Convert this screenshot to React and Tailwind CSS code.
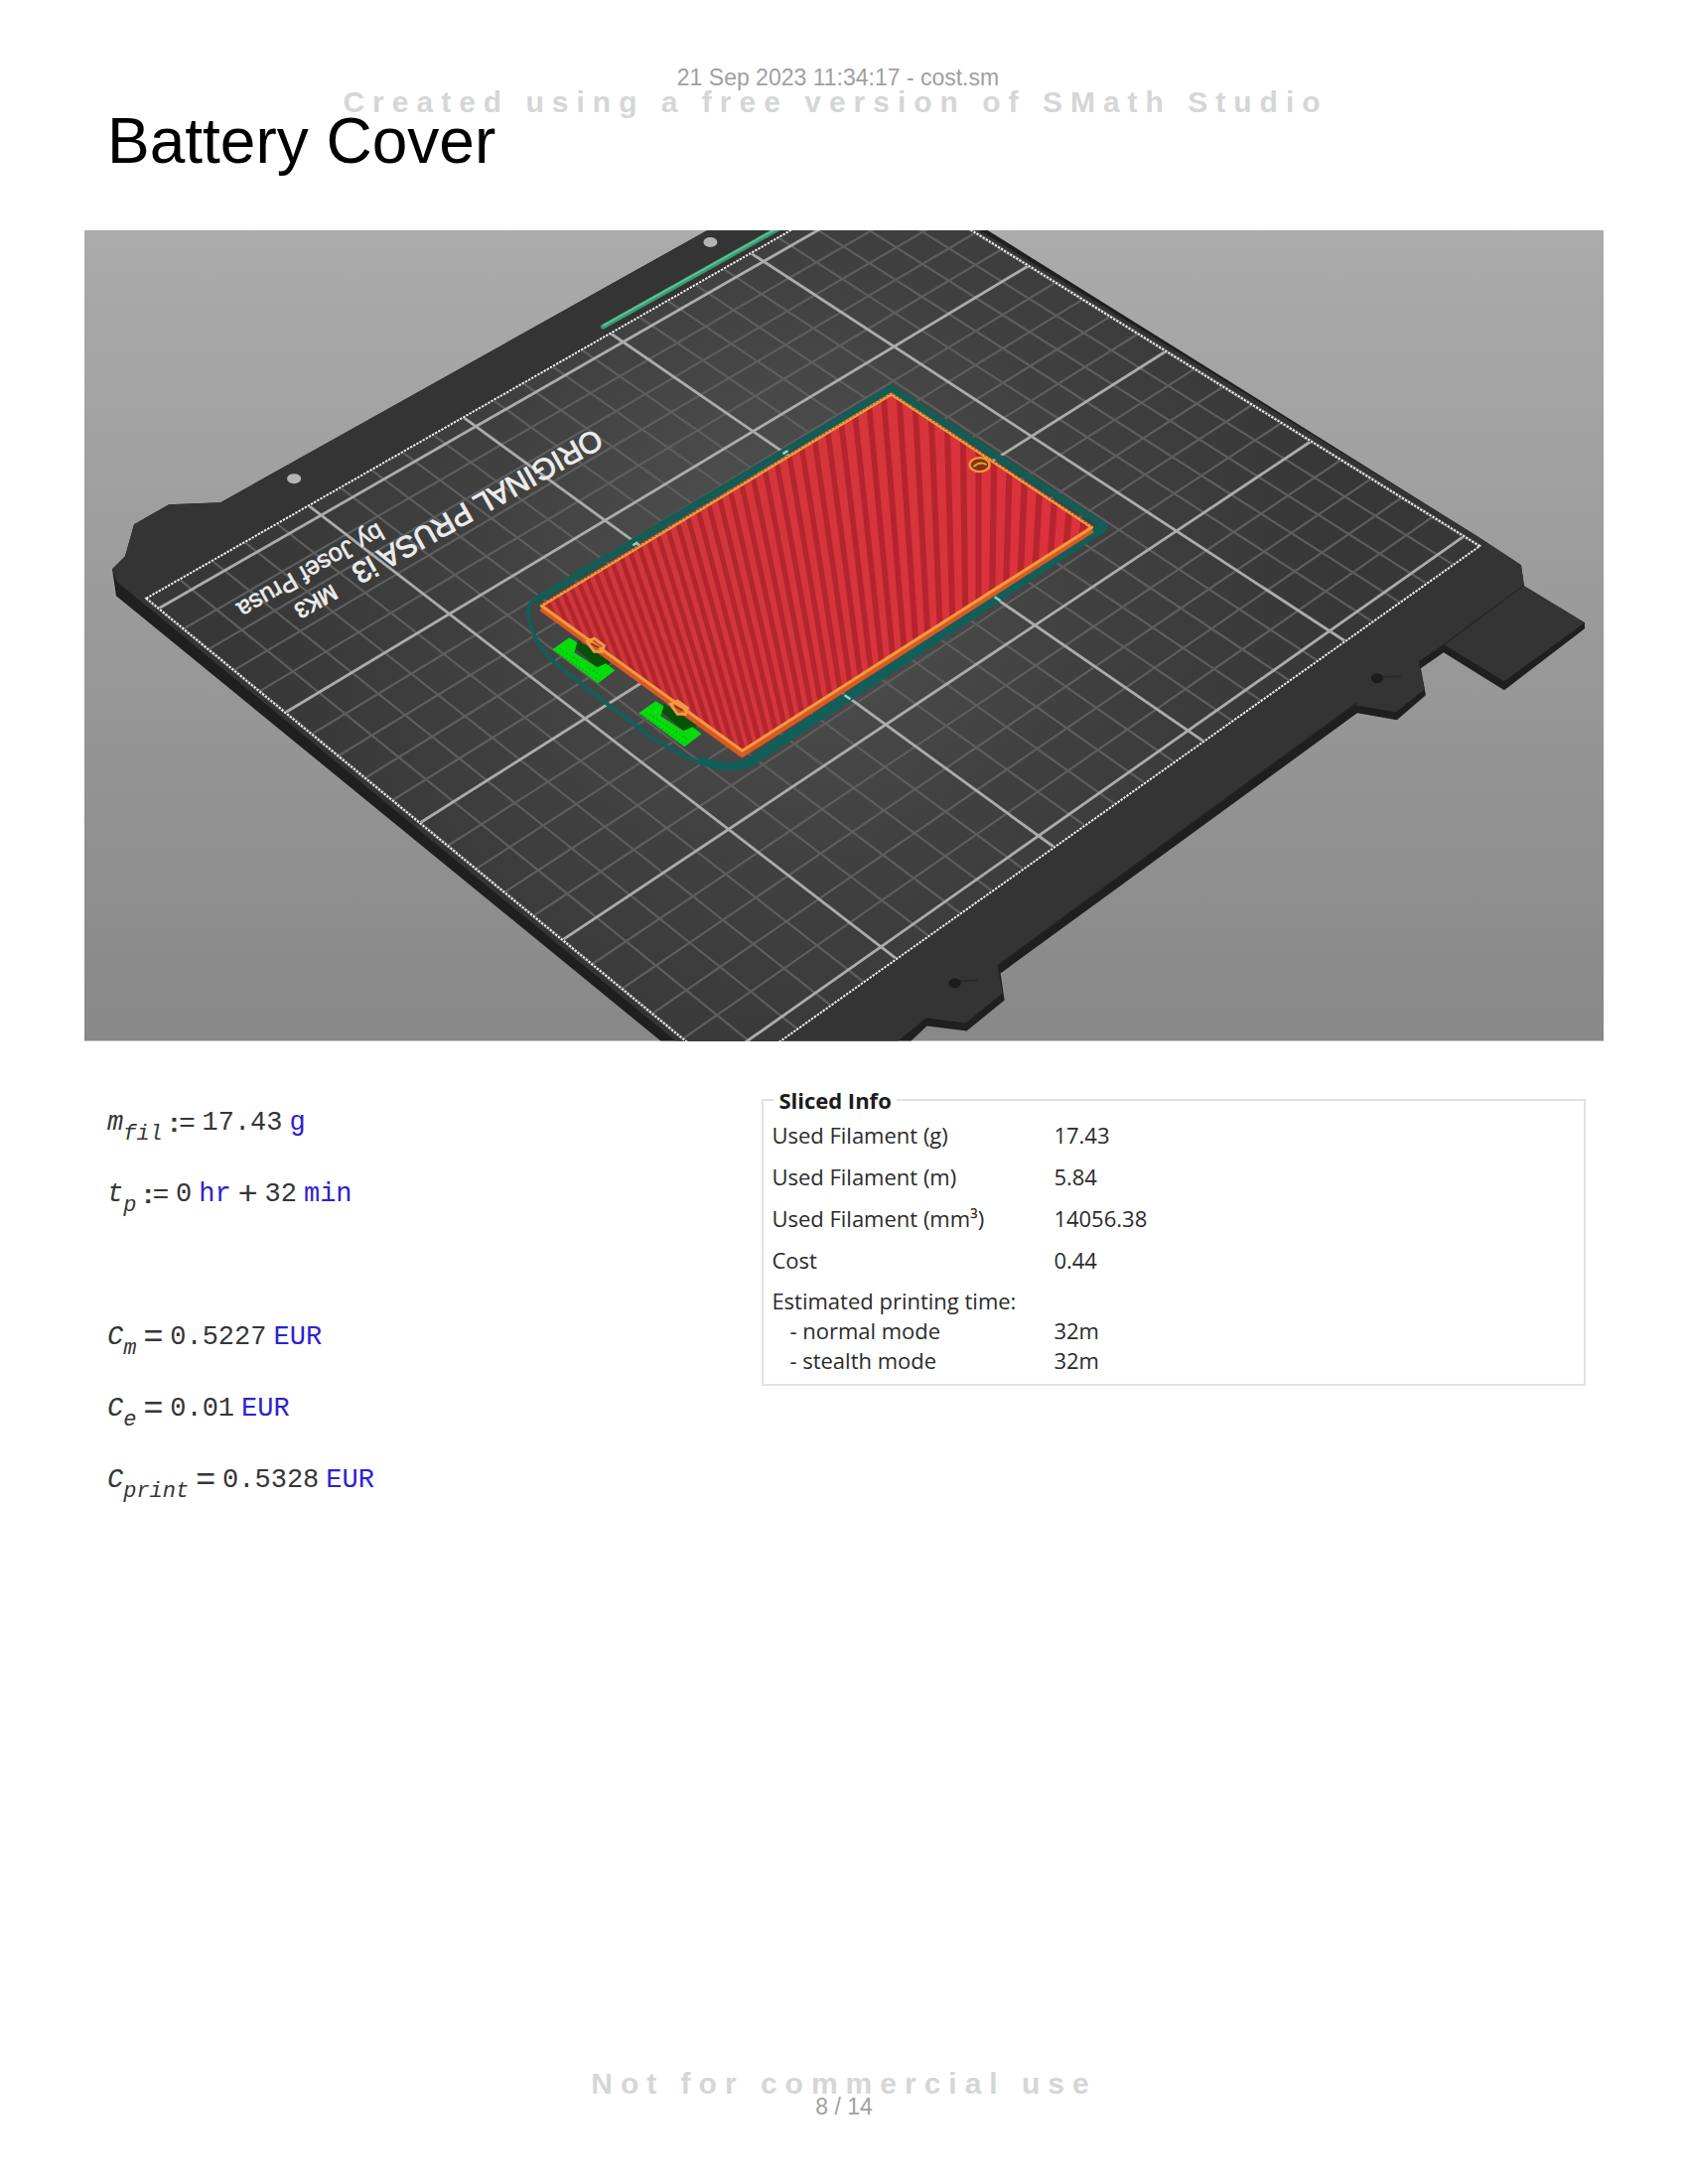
import React from "react";

/* ---------- perspective of the print bed ---------- */

// Bed coordinates are in units of 50 mm: u runs 0..5, v runs 0..4.
const ANCHORS = [
  [0, 0, 159.6, 612.7],
  [5, 4, 1473.5, 540],
  [4, 0, 768.6, 263.3],
  [1, 4, 886.6, 953.3],
];

function solveProjection(anchors) {
  const m = [];
  for (const [u, v, x, y] of anchors) {
    m.push([u, v, 1, 0, 0, 0, -u * x, -v * x, x]);
    m.push([0, 0, 0, u, v, 1, -u * y, -v * y, y]);
  }
  for (let c = 0; c < 8; c++) {
    let p = c;
    for (let r = c; r < 8; r++) if (Math.abs(m[r][c]) > Math.abs(m[p][c])) p = r;
    [m[c], m[p]] = [m[p], m[c]];
    for (let r = 0; r < 8; r++) {
      if (r === c) continue;
      const f = m[r][c] / m[c][c];
      for (let k = c; k < 9; k++) m[r][k] -= f * m[c][k];
    }
  }
  return m.map((row, i) => row[8] / row[i]);
}

const H = solveProjection(ANCHORS);

function project(u, v) {
  const w = H[6] * u + H[7] * v + 1;
  return [(H[0] * u + H[1] * v + H[2]) / w, (H[3] * u + H[4] * v + H[5]) / w];
}

const toPoints = (list) =>
  list.map(([u, v]) => project(u, v).map((n) => n.toFixed(1)).join(",")).join(" ");

function BedLine({ from, to, ...rest }) {
  return <polyline points={toPoints([from, to])} fill="none" {...rest} />;
}

const V_MIN = -0.1;
const V_MAX = 4.1;
const EDGE = [
  [0, V_MIN],
  [5, V_MIN],
  [5, V_MAX],
  [0, V_MAX],
];

function BedGrid() {
  const minor = [];
  const major = [];
  for (let i = 0; i <= 25; i++) {
    const line = <BedLine key={"u" + i} from={[i / 5, V_MIN]} to={[i / 5, V_MAX]} />;
    (i % 5 === 0 ? major : minor).push(line);
  }
  for (let j = 0; j <= 20; j++) {
    const line = <BedLine key={"v" + j} from={[0, j / 5]} to={[5, j / 5]} />;
    (j % 5 === 0 ? major : minor).push(line);
  }
  return (
    <g>
      <g stroke="#5e5e5e" strokeWidth="2.2">{minor}</g>
      <g stroke="#acacac" strokeWidth="2.8">{major}</g>
    </g>
  );
}

function InfillStripes() {
  const stripes = [];
  let x = 420;
  while (x < 1120) {
    const step = 10 + (5 * Math.max(0, x - 560)) / 540;
    const lean = (985 - x) * 0.001;
    stripes.push(
      <line
        key={x}
        x1={x - lean * 200}
        y1={380}
        x2={x + lean * 190}
        y2={770}
        stroke="#a81e28"
        strokeOpacity="0.72"
        strokeWidth={step * 0.44}
      />
    );
    x += step;
  }
  return <g>{stripes}</g>;
}

function Support({ dx, dy }) {
  return (
    <g transform={`translate(${dx} ${dy})`}>
      <polygon points="576,650 582,645 615,667 606,676" fill="#045204" />
      <polygon
        points="556,654 573,642 581,647 578,657 601,672 610,668 619,675 602,688"
        fill="#05dc0a"
      />
      <path d="M559 656 L603 685 M563 653 L606 681" stroke="#04a80a" strokeWidth="1" strokeDasharray="2 2" fill="none" />
    </g>
  );
}

function PrintBed() {
  return (
    <svg
      viewBox="85 232 1529 816"
      className="block h-auto w-full"
      role="img"
      aria-label="Sliced part on the print bed"
    >
      <defs>
        <linearGradient id="backdrop" x1="0" y1="0" x2="0" y2="1">
          <stop offset="0" stopColor="#ababab" />
          <stop offset="1" stopColor="#888888" />
        </linearGradient>
        <radialGradient id="sheet" gradientUnits="userSpaceOnUse" cx="790" cy="570" r="560">
          <stop offset="0" stopColor="#525252" />
          <stop offset="0.55" stopColor="#404040" />
          <stop offset="1" stopColor="#373737" />
        </radialGradient>
        <linearGradient id="infill" x1="0" y1="0" x2="1" y2="0">
          <stop offset="0" stopColor="#cc383b" />
          <stop offset="0.5" stopColor="#d4363c" />
          <stop offset="1" stopColor="#de313d" />
        </linearGradient>
        <clipPath id="part">
          <polygon points="897,397 1099,531 747,758 545,610" />
        </clipPath>
      </defs>

      <rect x="85" y="232" width="1529" height="816" fill="url(#backdrop)" />

      {/* heat bed, underside first */}
      <polygon
        points="712,232 994,232 1487,540 1531,569 1534,590 1595,627 1595,633 1514,695 1453,657 1430,673 1435,700 1406,725 1366,718 1007,980 1011,1007 973,1038 933,1033 917,1048 665,1048 117,600 113,573 126,560 135,528 170,508 222,506"
        fill="#1f1f1f"
      />
      <polygon
        points="712,232 986,232 1487,540 1531,569 1534,590 1595,627 1514,686 1453,649 1428,666 1434,694 1405,717 1362,710 1004,972 1009,1000 972,1030 932,1025 904,1048 680,1048 118,586 113,573 126,560 135,528 170,508 222,506"
        fill="#343434"
      />
      <path d="M1533 590 L1453 649 M1365 708 L1004 972" stroke="#262626" strokeWidth="1.5" fill="none" />
      <path d="M1410 681 L1386 682 M985 987 L961 988" stroke="#292929" strokeWidth="2" fill="none" />
      <ellipse cx="1386" cy="683" rx="6" ry="5" fill="#1c1c1c" />
      <ellipse cx="961" cy="990" rx="6" ry="5" fill="#1c1c1c" />
      <ellipse cx="296" cy="482" rx="7" ry="5" fill="#b5b5b5" />
      <ellipse cx="715" cy="244" rx="7" ry="5" fill="#b5b5b5" />

      <polygon points={toPoints(EDGE)} fill="url(#sheet)" />
      <BedGrid />
      <polygon points={toPoints(EDGE)} fill="none" stroke="#303030" strokeWidth="2.4" />
      <polygon
        points={toPoints(EDGE)}
        fill="none"
        stroke="#f0f0f0"
        strokeWidth="2"
        strokeDasharray="2.4 1.2"
      />
      <line x1="607" y1="329" x2="782" y2="231" stroke="#3a9b74" strokeWidth="5" strokeLinecap="round" />
      <line x1="607" y1="328" x2="782" y2="230" stroke="#5fc79b" strokeWidth="1.6" />

      {/* bed lettering */}
      <g fill="#ececec" stroke="#ececec" strokeWidth="0.9" fontFamily="'Liberation Sans', Arial, sans-serif">
        <text transform="translate(599 431) rotate(150.5)" fontSize="30">
          ORIGINAL PRUSA i3
        </text>
        <text transform="translate(334 588) rotate(150.5)" fontSize="22">
          MK3
        </text>
        <text transform="translate(380 526) rotate(150)" fontSize="25" strokeWidth="0.6">
          by Josef Prusa
        </text>
      </g>

      {/* skirt */}
      <path d="M541 603 L897 391 L1112 530" stroke="#145c54" strokeWidth="7" strokeLinejoin="round" fill="none" />
      <path d="M1110 531 L752 769" stroke="#125f5a" strokeWidth="10" strokeLinecap="round" fill="none" />
      <path
        d="M541 602 Q530 607 532 620 Q536 646 558 667 L613 710 L657 743 Q680 758 703 767 Q735 779 756 768"
        stroke="#125f58"
        strokeWidth="4"
        fill="none"
      />
      <path d="M703 765 Q735 777 756 767" stroke="#125f5a" strokeWidth="8" fill="none" />

      <Support dx={0} dy={0} />
      <Support dx={87} dy={64} />

      {/* part */}
      <g clipPath="url(#part)">
        <rect x="540" y="390" width="565" height="375" fill="url(#infill)" />
        <InfillStripes />
      </g>
      <path d="M545 612 L747 759 L1099 533" stroke="#d85a22" strokeWidth="7" strokeLinejoin="round" fill="none" />
      <path
        d="M897 397 L1099 531 L747 756 L545 610 Z"
        stroke="#f29a3e"
        strokeWidth="3"
        strokeLinejoin="round"
        fill="none"
      />
      <path d="M545 609 L897 396 L1099 530" stroke="#8a5a20" strokeWidth="1" strokeDasharray="2 2" fill="none" />
      <g fill="none" stroke="#f49a45" strokeWidth="3">
        <path d="M591 646 L598 643 L608 650 L606 656 L598 656 Z" />
        <path d="M675 709 L682 706 L692 713 L690 719 L682 719 Z" />
      </g>
      <path d="M595 648 L603 652 M679 711 L687 715" stroke="#8a3a10" strokeWidth="2" />
      <ellipse cx="986" cy="468" rx="10" ry="7" fill="#8f2a1c" stroke="#e89a2e" strokeWidth="2.4" />
      <path d="M980 470 Q986 464 993 468" stroke="#c9b32c" strokeWidth="2" fill="none" />
      <g stroke="#9ccfc4" strokeWidth="2.4">
        <path d="M788 457 L793 454" />
        <path d="M637 549 L642 546" />
        <path d="M850 700 L856 704" />
        <path d="M1001 601 L1007 605" />
      </g>
    </svg>
  );
}

/* ---------- worksheet formulas ---------- */

function Unit({ children }) {
  return <span className="text-[#2a22d4]">{children}</span>;
}

function Assign() {
  return (
    <span className="font-['Liberation_Sans',Arial,sans-serif] text-[28px] leading-none">
      <span className="align-[-2px]">
        <b>:</b>=
      </span>
    </span>
  );
}

function Sign({ children }) {
  return (
    <span className="font-['Liberation_Sans',Arial,sans-serif] text-[34px] leading-none">
      <span className="align-[-3px]">{children}</span>
    </span>
  );
}

function Formula({ name, sub, children }) {
  return (
    <div className="flex h-[72px] items-baseline gap-[7px] leading-[72px]">
      <span className="italic">
        {name}
        <sub className="static align-[-10px] text-[22px]">{sub}</sub>
      </span>
      {children}
    </div>
  );
}

function Formulas() {
  return (
    <section className="mt-[46px] pl-[23px] font-['Liberation_Mono','Courier_New',monospace] text-[27px] text-[#363636]">
      <Formula name="m" sub="fil">
        <Assign />
        <span>17.43</span>
        <Unit>g</Unit>
      </Formula>
      <Formula name="t" sub="p">
        <Assign />
        <span>0</span>
        <Unit>hr</Unit>
        <Sign>+</Sign>
        <span>32</span>
        <Unit>min</Unit>
      </Formula>
      <div className="mt-[72px]">
        <Formula name="C" sub="m">
          <Sign>=</Sign>
          <span>0.5227</span>
          <Unit>EUR</Unit>
        </Formula>
        <Formula name="C" sub="e">
          <Sign>=</Sign>
          <span>0.01</span>
          <Unit>EUR</Unit>
        </Formula>
        <Formula name="C" sub="print">
          <Sign>=</Sign>
          <span>0.5328</span>
          <Unit>EUR</Unit>
        </Formula>
      </div>
    </section>
  );
}

/* ---------- slicer summary ---------- */

const USAGE = [
  ["Used Filament (g)", "17.43"],
  ["Used Filament (m)", "5.84"],
  ["Used Filament (mm³)", "14056.38"],
  ["Cost", "0.44"],
];

const TIMES = [
  ["- normal mode", "32m"],
  ["- stealth mode", "32m"],
];

function SlicedInfo() {
  return (
    <fieldset className="mr-[18px] border-2 border-[#e2e2e2] px-[8px] pb-[9px] font-['Open_Sans','Noto_Sans',sans-serif] text-[22px] text-[#2b2b2b]">
      <legend className="ml-[2px] px-[5px] leading-[30px] font-bold text-[#1c1c1c]">Sliced Info</legend>
      <table className="w-full border-collapse text-left">
        <tbody>
          {USAGE.map(([label, value]) => (
            <tr key={label} className="h-[42px]">
              <th scope="row" className="w-[284px] p-0 font-normal">{label}</th>
              <td className="p-0">{value}</td>
            </tr>
          ))}
          <tr className="h-[34px]">
            <th colSpan={2} className="p-0 align-bottom leading-[30px] font-normal">
              Estimated printing time:
            </th>
          </tr>
          {TIMES.map(([label, value]) => (
            <tr key={label} className="h-[30px] leading-[30px]">
              <th scope="row" className="p-0 pl-[18px] font-normal">{label}</th>
              <td className="p-0">{value}</td>
            </tr>
          ))}
        </tbody>
      </table>
    </fieldset>
  );
}

function Watermark({ children }) {
  return (
    <p className="text-[30px] leading-[22px] font-bold tracking-[8px] text-[#d5d6d6]">{children}</p>
  );
}

export default function App() {
  return (
    <div className="flex min-h-screen flex-col bg-white px-[85px] pt-[65px] pb-[66px] font-['Liberation_Sans',Arial,sans-serif]">
      <header className="pr-[12px] text-center">
        <p className="text-[23px] leading-[27px] text-[#a0a0a0]">21 Sep 2023 11:34:17 - cost.sm</p>
        <div className="pr-[5px]">
          <Watermark>Created using a free version of SMath Studio</Watermark>
        </div>
      </header>
      <main>
        <h1 className="pl-[23px] text-[64px] leading-[56px] text-black">Battery Cover</h1>
        <div className="mt-[62px]">
          <PrintBed />
        </div>
        <div className="grid grid-cols-[446fr_554fr]">
          <Formulas />
          <div className="pt-[44px]">
            <SlicedInfo />
          </div>
        </div>
      </main>
      <footer className="mt-auto text-center">
        <Watermark>Not for commercial use</Watermark>
        <p className="text-[23px] leading-[24px] text-[#a0a0a0]">8 / 14</p>
      </footer>
    </div>
  );
}
